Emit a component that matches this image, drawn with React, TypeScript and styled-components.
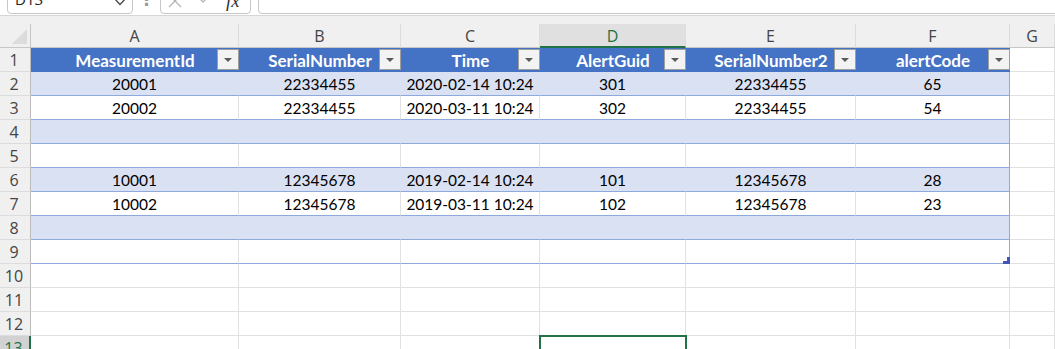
import React from 'react';
import styled, { createGlobalStyle, css } from 'styled-components';

const GlobalStyle = createGlobalStyle`
  html, body {
    margin: 0;
    padding: 0;
    background: #ffffff;
    overflow: hidden;
  }
  body {
    font-family: 'Lato', 'Open Sans', sans-serif;
  }
`;

const GREEN = '#217346';
const TABLE_BLUE = '#4472C4';
const TABLE_LINE = '#8EA9DB';
const BAND = '#D9E1F2';
const GRID = '#e1e1e1';

const columnWidths = [208, 162, 139, 146, 170, 154];
const letters = ['A', 'B', 'C', 'D', 'E', 'F', 'G'];
const headers = [
  'MeasurementId',
  'SerialNumber',
  'Time',
  'AlertGuid',
  'SerialNumber2',
  'alertCode',
];
const tableRows: string[][] = [
  ['20001', '22334455', '2020-02-14 10:24', '301', '22334455', '65'],
  ['20002', '22334455', '2020-03-11 10:24', '302', '22334455', '54'],
  [],
  [],
  ['10001', '12345678', '2019-02-14 10:24', '101', '12345678', '28'],
  ['10002', '12345678', '2019-03-11 10:24', '102', '12345678', '23'],
  [],
  [],
];
const selectedCol = 'D';
const selectedRow = 13;

const Page = styled.div`
  width: 1055px;
  height: 349px;
  overflow: hidden;
`;

// formula bar, only its lower edge is on screen
const FormulaBar = styled.div`
  height: 15px;
  overflow: hidden;
  display: flex;
  align-items: flex-end;
  padding-left: 7px;
  border-bottom: 1px solid #d6d6d6;
  background: #ffffff;
`;

const BarBox = styled.div<{ $width?: number; $grow?: boolean }>`
  box-sizing: border-box;
  height: 30px;
  margin-bottom: 1px;
  ${(p) => (p.$grow ? 'flex: 1;' : `width: ${p.$width}px;`)}
  border: 1px solid #c7c7c7;
  border-radius: 4px;
  display: flex;
  align-items: center;
  background: #ffffff;
  ${(p) => p.$grow && 'margin-right: -8px;'}
`;

const NameText = styled.span`
  flex: 1;
  padding-left: 7px;
  font-family: 'Open Sans', sans-serif;
  font-size: 15px;
  color: #222;
`;

const Chevron = styled.svg`
  width: 14px;
  height: 9px;
  margin-right: 5px;
  margin-top: 4px;
`;

const Dots = styled.div`
  width: 27px;
  height: 30px;
  display: flex;
  justify-content: center;
  align-items: center;
  font-family: 'DejaVu Sans', sans-serif;
  font-size: 17px;
  font-weight: 700;
  color: #999;
  margin-bottom: 1px;
`;

const FormulaIcons = styled.div`
  display: flex;
  align-items: center;
  gap: 13px;
  padding-left: 7px;
  padding-top: 3px;
`;

const FxText = styled.span`
  font-family: 'Liberation Serif', serif;
  font-style: italic;
  font-size: 19px;
  color: #333;
  margin-left: 2px;
`;

const Gap = styled.div`
  width: 7px;
`;

const HeaderGap = styled.div`
  height: 8px;
  background: #f0f0f0;
`;

const Sheet = styled.div`
  display: grid;
  grid-template-columns: 31px ${columnWidths.map((w) => `${w}px`).join(' ')} 1fr;
  grid-auto-rows: 24px;
`;

const Corner = styled.div`
  box-sizing: border-box;
  background: #f0f0f0;
  border-right: 1px solid #c6c6c6;
  border-bottom: 1px solid #c6c6c6;
  display: flex;
  align-items: flex-end;
  justify-content: flex-end;
  padding: 0 3px 3px 0;
`;

const CornerMark = styled.div`
  width: 0;
  height: 0;
  border-left: 15px solid transparent;
  border-bottom: 15px solid #dcdcdc;
`;

const ColHeader = styled.div<{ $selected?: boolean }>`
  box-sizing: border-box;
  background: ${(p) => (p.$selected ? '#e0e0e0' : '#f0f0f0')};
  border-right: 1px solid #dcdcdc;
  border-bottom: ${(p) => (p.$selected ? `2px solid ${GREEN}` : '1px solid #c6c6c6')};
  display: flex;
  align-items: center;
  justify-content: center;
  font-family: 'Open Sans', sans-serif;
  font-size: 16px;
  color: ${(p) => (p.$selected ? GREEN : '#444')};
  padding-top: 1px;
`;

const RowHeader = styled.div<{ $selected?: boolean }>`
  box-sizing: border-box;
  background: ${(p) => (p.$selected ? '#d2d2d2' : '#f0f0f0')};
  border-right: ${(p) => (p.$selected ? `2px solid ${GREEN}` : '1px solid #bcbcbc')};
  border-bottom: 1px solid #dcdcdc;
  display: flex;
  align-items: center;
  justify-content: center;
  padding-right: 2px;
  font-family: 'Open Sans', sans-serif;
  font-size: 16px;
  color: ${(p) => (p.$selected ? GREEN : '#444')};
`;

type CellKind = 'band' | 'plain' | 'outside';

const Cell = styled.div<{ $kind: CellKind; $edge?: boolean; $selected?: boolean }>`
  box-sizing: border-box;
  position: relative;
  display: flex;
  align-items: center;
  justify-content: center;
  font-size: 15.5px;
  color: #000;
  padding-top: 1px;
  ${(p) =>
    p.$kind === 'band' &&
    css`
      background: ${BAND};
      border-right: 1px solid ${p.$edge ? TABLE_LINE : BAND};
      border-bottom: 1px solid ${TABLE_LINE};
    `}
  ${(p) =>
    p.$kind === 'plain' &&
    css`
      background: #ffffff;
      border-right: 1px solid ${p.$edge ? TABLE_LINE : GRID};
      border-bottom: 1px solid ${TABLE_LINE};
    `}
  ${(p) =>
    p.$kind === 'outside' &&
    css`
      background: #ffffff;
      border-right: 1px solid ${GRID};
      border-bottom: 1px solid ${GRID};
    `}
  ${(p) =>
    p.$selected &&
    css`
      outline: 2px solid ${GREEN};
      outline-offset: -1px;
      z-index: 1;
    `}
`;

const HeadCell = styled.div`
  box-sizing: border-box;
  background: ${TABLE_BLUE};
  display: grid;
  grid-template-columns: 22px 1fr 22px;
  align-items: center;
  color: #ffffff;
  font-weight: 700;
  font-size: 17px;
`;

const HeadLabel = styled.span`
  text-align: center;
  white-space: nowrap;
  padding-top: 1px;
`;

const FilterButton = styled.div`
  box-sizing: border-box;
  width: 22px;
  height: 21px;
  align-self: start;
  margin-top: 1px;
  border: 1px solid #9f9f9f;
  background: #f3f3f3;
  display: flex;
  align-items: center;
  justify-content: center;
`;

const FilterArrow = styled.div`
  width: 0;
  height: 0;
  border-left: 4px solid transparent;
  border-right: 4px solid transparent;
  border-top: 4px solid #5a5a5a;
  margin-top: 1px;
`;

const ResizeHandle = styled.svg`
  position: absolute;
  right: -1px;
  bottom: -1px;
  width: 7px;
  height: 7px;
`;

const XIcon = () => (
  <svg width="14" height="14" viewBox="0 0 14 14">
    <path d="M1 1 L13 13 M13 1 L1 13" stroke="#b5b5b5" strokeWidth="1.3" fill="none" />
  </svg>
);

const CheckIcon = () => (
  <svg width="16" height="14" viewBox="0 0 16 14">
    <path d="M1 1 L8 8 L15 1" stroke="#b5b5b5" strokeWidth="1.3" fill="none" />
  </svg>
);

const App = () => {
  const outsideRows = [10, 11, 12, 13];

  return (
    <Page>
      <GlobalStyle />
      <FormulaBar>
        <BarBox $width={126}>
          <NameText>D13</NameText>
          <Chevron viewBox="0 0 14 9">
            <path d="M1 1 L7 7.5 L13 1" stroke="#444" strokeWidth="1.3" fill="none" />
          </Chevron>
        </BarBox>
        <Dots>⋮</Dots>
        <BarBox $width={91}>
          <FormulaIcons>
            <XIcon />
            <CheckIcon />
            <FxText>fx</FxText>
          </FormulaIcons>
        </BarBox>
        <Gap />
        <BarBox $grow />
      </FormulaBar>
      <HeaderGap />
      <Sheet>
        <Corner>
          <CornerMark />
        </Corner>
        {letters.map((l) => (
          <ColHeader key={l} $selected={l === selectedCol}>
            {l}
          </ColHeader>
        ))}

        <RowHeader>1</RowHeader>
        {headers.map((h) => (
          <HeadCell key={h}>
            <span />
            <HeadLabel>{h}</HeadLabel>
            <FilterButton>
              <FilterArrow />
            </FilterButton>
          </HeadCell>
        ))}
        <Cell $kind="outside" />

        {tableRows.map((row, i) => {
          const kind: CellKind = i % 2 === 0 ? 'band' : 'plain';
          const last = i === tableRows.length - 1;
          return (
            <React.Fragment key={i}>
              <RowHeader>{i + 2}</RowHeader>
              {headers.map((_, c) => (
                <Cell key={c} $kind={kind} $edge={c === headers.length - 1}>
                  {row[c]}
                  {last && c === headers.length - 1 && (
                    <ResizeHandle viewBox="0 0 7 7">
                      <path d="M4 0 H7 V7 H0 V4 H4 Z" fill="#4256b8" />
                    </ResizeHandle>
                  )}
                </Cell>
              ))}
              <Cell $kind="outside" />
            </React.Fragment>
          );
        })}

        {outsideRows.map((r) => (
          <React.Fragment key={r}>
            <RowHeader $selected={r === selectedRow}>{r}</RowHeader>
            {letters.map((l) => (
              <Cell
                key={l}
                $kind="outside"
                $selected={r === selectedRow && l === selectedCol}
              />
            ))}
          </React.Fragment>
        ))}
      </Sheet>
    </Page>
  );
};

export default App;
